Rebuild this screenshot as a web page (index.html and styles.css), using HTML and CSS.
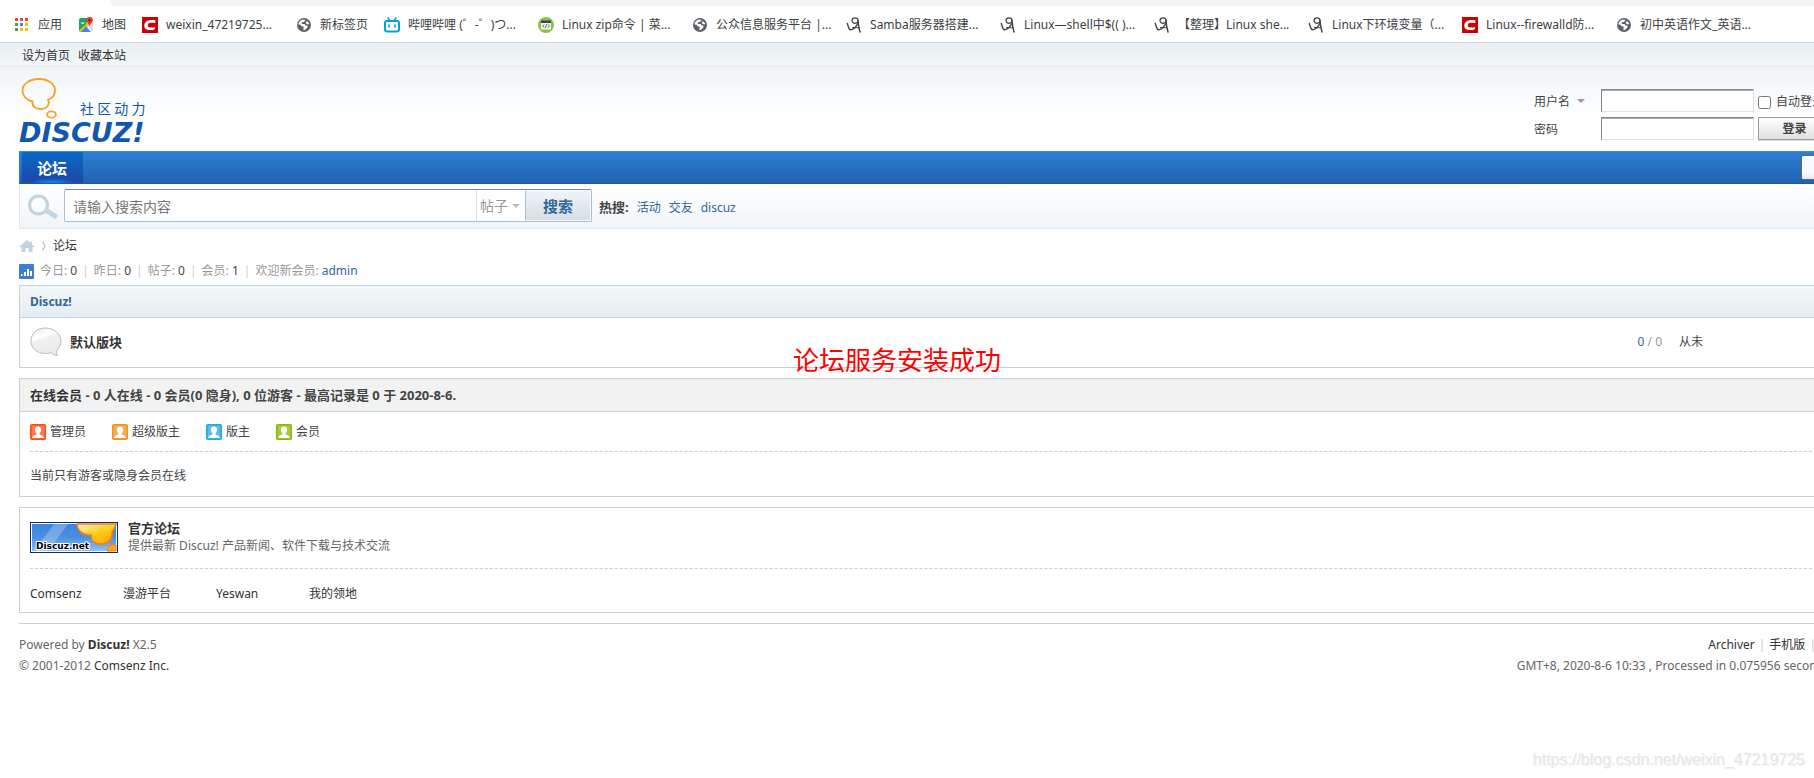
FILE: index.html
```
<!DOCTYPE html>
<html lang="zh-CN">
<head>
<meta charset="utf-8">
<title>论坛 - Powered by Discuz!</title>
<link rel="stylesheet" href="styles.css">
</head>
<body>
<svg class="defs" width="0" height="0" aria-hidden="true">
  <defs>
    <symbol id="globe" viewBox="0 0 16 16">
      <circle cx="8" cy="8" r="7" fill="#5f6368"/>
      <path d="M2.400 7.500C2.700 4.800 4.600 2.800 7.500 2.500L9.500 3 8.200 4.800 6 5.200 5.600 7H8.800L9.400 8.400H11.200L11.600 10 10 12 7.600 13.600 7.400 11.200 8 9.800 5.600 9.200 4.600 7.800z" fill="#fff"/>
      <path d="M11 4 13.300 6.600 12.400 7.600 10.400 6.800 9.800 5.600z" fill="#fff"/>
    </symbol>
    <symbol id="csdn" viewBox="0 0 16 16">
      <path d="M0 0h16v16H0z" fill="#c00"/>
      <path d="M13.600 3.400C11.500 2.900 9.200 2.900 7 3.300 4 3.900 2.400 6 2.300 8.600 2.200 11.600 4.400 13 7.300 13.100c1.900 0 3.800-.1 5.300-.6l.4-2.600c-1.600.5-3.200.6-4.600.5C6.500 10.300 5.600 9.600 5.700 8.200 5.900 6.600 7 5.800 8.600 5.700c1.600-.1 3.100 0 4.600.4z" fill="#fff"/>
    </symbol>
    <symbol id="nine" viewBox="0 0 16 16">
      <g fill="none" stroke="#444" stroke-linecap="round">
        <ellipse cx="9" cy="3.600" rx="3" ry="2.700" stroke-width="1.200"/>
        <path d="M12 3.500C12.200 7 12.800 11 14 15" stroke-width="1.500"/>
        <path d="M11.800 6.500C10 10 8 12 5.500 12.600 3.800 13 3 12 2.600 10.500L1.300 6.500" stroke-width="1.400"/>
        <path d="M6.500 10.500 12.800 10.800" stroke-width="1"/>
      </g>
    </symbol>
    <symbol id="member" viewBox="0 0 16 16">
      <rect x=".5" y=".5" width="15" height="15" rx="1" fill="currentColor" stroke="currentColor"/>
      <rect x="1.500" y="1.500" width="13" height="13" fill="#fff" opacity=".25"/>
      <path d="M8 2.500C5.800 2.500 4.800 4 4.900 6c.1 1.400.7 2.500 1.500 3.200v1.200C4.200 11 2.500 11.800 2 14h12c-.5-2.200-2.200-3-4.400-3.600V9.200C10.400 8.500 11 7.400 11.100 6 11.200 4 10.200 2.500 8 2.500z" fill="#fff"/>
    </symbol>
  </defs>
</svg>

<header class="browser">
  <div class="omnibox"></div>
  <nav class="bookmarks">
    <a class="bm" href="#"><svg viewBox="0 0 16 16"><g><path fill="#ea4335" d="M1 1h3v3H1zM6 1h3v3H6zM11 1h3v3h-3z"/><path fill="#34a853" d="M1 6h3v3H1z"/><path fill="#4285f4" d="M6 6h3v3H6z"/><path fill="#fbbc04" d="M11 6h3v3h-3z"/><path fill="#34a853" d="M1 11h3v3H1z"/><path fill="#fbbc04" d="M6 11h3v3H6zM11 11h3v3h-3z"/></g></svg>应用</a>
    <a class="bm" href="#"><svg viewBox="0 0 16 16"><path fill="#1ea362" d="M1 3q0-2 2-2h7L8 8 1 14z"/><path fill="#dadce0" d="M10 6h5v7q0 2-1 1L8 8z"/><path fill="#fbbc04" d="M1 14 9 6l2 2-7 7H2z"/><path fill="#4285f4" d="M3 15l5-6 5 6z"/><path fill="#fff" d="M3 5.500h3.400C6.200 8 3 7.500 3 5z"/><path fill="#ea4335" d="M11.500 0A3.300 3.300 0 0 0 8.300 3.400C8.300 5.600 11 6.500 11.500 9.500 12 6.500 14.900 5.600 14.900 3.400A3.300 3.300 0 0 0 11.500 0z"/><circle cx="11.600" cy="3.300" r="1.200" fill="#811411"/></svg>地图</a>
    <a class="bm bm-long" href="#"><svg><use href="#csdn"/></svg>weixin_47219725...</a>
    <a class="bm" href="#"><svg><use href="#globe"/></svg>新标签页</a>
    <a class="bm bm-long" href="#"><svg viewBox="0 0 16 16"><rect x="1" y="4" width="14" height="10.500" rx="2" fill="none" stroke="#00a1d6" stroke-width="2"/><path d="M4 1l2 2.500M12 1l-2 2.500M5 8v2M11 8v2" stroke="#00a1d6" stroke-width="1.600" stroke-linecap="round"/></svg>哔哩哔哩 (゜-゜)つ...</a>
    <a class="bm bm-long" href="#"><svg viewBox="0 0 16 16"><circle cx="8" cy="8" r="8" fill="#8bc34a"/><rect x="3" y="4" width="10" height="8.500" fill="#eef3ee"/><path fill="#37474f" d="M3 3.500h10v2.500H3z"/><path d="M6 7.500 4.600 9 6 10.500M10 7.500 11.400 9 10 10.500M8.600 7.200 7.400 10.800" fill="none" stroke="#37474f" stroke-width=".8"/></svg>Linux zip命令 | 菜...</a>
    <a class="bm bm-long" href="#"><svg><use href="#globe"/></svg>公众信息服务平台 |...</a>
    <a class="bm bm-long" href="#"><svg><use href="#nine"/></svg>Samba服务器搭建...</a>
    <a class="bm bm-long" href="#"><svg><use href="#nine"/></svg>Linux—shell中$(( )...</a>
    <a class="bm bm-long" href="#"><svg><use href="#nine"/></svg>【整理】Linux she...</a>
    <a class="bm bm-long" href="#"><svg><use href="#nine"/></svg>Linux下环境变量（...</a>
    <a class="bm bm-long" href="#"><svg><use href="#csdn"/></svg>Linux--firewalld防...</a>
    <a class="bm bm-long" href="#"><svg><use href="#globe"/></svg>初中英语作文_英语...</a>
  </nav>
</header>

<div class="page">
  <div class="topbar"><a href="#">设为首页</a><a href="#">收藏本站</a></div>

  <div class="masthead">
    <div class="wrap masthead-row">
      <a class="logo" href="#" aria-label="Discuz! 社区动力">
        <svg width="140" height="66" viewBox="0 0 140 66">
          <g fill="none" stroke="#f6a02d" stroke-width="1.800">
            <path d="M13.500 24.500C7 23 3.500 18.500 3.500 13.500 3.500 6.500 11 2 20 2s16 5 16 11.500c0 4-2.500 7.500-7 9.500 2.500 4-1 9-7.500 9C16.500 32 13 29.500 13.500 24.500z"/>
            <ellipse cx="32.500" cy="37.500" rx="4.300" ry="3.200"/>
          </g>
          <text class="logo-cn" x="61" y="37">社 区 动 力</text>
          <text class="logo-en" x="0" y="65">DISCUZ!</text>
        </svg>
      </a>
      <form class="login">
        <label class="who" for="user">用户名 <span class="caret"></span></label>
        <input class="field" id="user" type="text">
        <label class="auto"><input type="checkbox">自动登录</label>
        <label class="who" for="pass">密码</label>
        <input class="field" id="pass" type="password">
        <button class="login-btn" type="button">登录</button>
      </form>
    </div>
  </div>

  <div class="wrap">
    <nav class="mainnav">
      <a class="tab" href="#">论坛</a>
      <button class="quick" type="button" aria-label="快捷导航"></button>
    </nav>

    <form class="search">
      <svg class="lens" width="30" height="26" viewBox="0 0 30 26"><path d="M19 17 27 22" stroke="#c2d3e1" stroke-width="5" stroke-linecap="round"/><circle cx="10.500" cy="11" r="9" fill="#fafcfd" stroke="#c2d3e1" stroke-width="3.200"/></svg>
      <div class="searchbox">
        <input class="query" type="text" placeholder="请输入搜索内容" aria-label="搜索内容">
        <button class="scope" type="button">帖子<span class="caret light"></span></button>
        <button class="go" type="button">搜索</button>
      </div>
      <div class="hot"><strong>热搜:</strong><a href="#">活动</a><a href="#">交友</a><a href="#">discuz</a></div>
    </form>

    <nav class="crumbs">
      <a href="#" aria-label="首页"><svg width="16" height="14" viewBox="0 0 16 14"><path fill="#c2d3e1" d="M8 1 0 8h2.500v5h4V9h3v4h4V8H16l-3-2.600V2.500h-1.500V4z"/></svg></a>
      <svg width="6" height="12" viewBox="0 0 6 12"><path d="M1.500 1.500 4 6 1.500 10.500" fill="none" stroke="#aaa"/></svg>
      <a href="#">论坛</a>
    </nav>

    <div class="stats">
      <svg width="15" height="15" viewBox="0 0 15 15"><rect width="15" height="15" rx="1" fill="#3b80cf"/><path fill="#fff" d="M2 10h1.500v2H2zM5 8h2v4H5zM8 5h2v7H8zM11 7h2v5h-2z"/></svg>
      <p>今日: <em>0</em><i>|</i>昨日: <em>0</em><i>|</i>帖子: <em>0</em><i>|</i>会员: <em>1</em><i>|</i>欢迎新会员: <a href="#">admin</a></p>
    </div>

    <section class="box">
      <h2 class="box-head blue"><a href="#">Discuz!</a></h2>
      <div class="forum">
        <svg width="32" height="30" viewBox="0 0 32 30"><defs><linearGradient id="bubble" x2=".4" y2="1"><stop offset="0" stop-color="#ececec"/><stop offset=".4" stop-color="#fff"/><stop offset=".5" stop-color="#f0f0f0"/><stop offset="1" stop-color="#ebebeb"/></linearGradient></defs><path d="M15.500 1C7 1 1 6.500 1 14c0 7.500 6 12.500 14.500 12.500 2 0 4-.3 5.500-.8 1.500 1.500 4 2.800 6.500 2.800-1-1.300-1-3.500-.3-5.500C29.500 20.500 31 17.500 31 14 31 6.500 24 1 15.500 1z" fill="url(#bubble)" stroke="#bbb"/></svg>
        <a class="forum-name" href="#">默认版块</a>
        <span class="count"><b>0</b> / 0</span>
        <span class="last">从未</span>
      </div>
    </section>

    <section class="box">
      <h2 class="box-head gray"><a href="#">在线会员</a> - 0 人在线 - 0 会员(0 隐身), 0 位游客 - 最高记录是 0 于 2020-8-6.</h2>
      <div class="box-body">
        <ul class="roles">
          <li><svg class="r-admin"><use href="#member"/></svg>管理员</li>
          <li><svg class="r-super"><use href="#member"/></svg>超级版主</li>
          <li><svg class="r-mod"><use href="#member"/></svg>版主</li>
          <li><svg class="r-user"><use href="#member"/></svg>会员</li>
        </ul>
        <p class="online">当前只有游客或隐身会员在线</p>
      </div>
    </section>

    <section class="box">
      <div class="box-body">
        <div class="official">
          <svg width="88" height="31" viewBox="0 0 88 31">
            <defs>
              <linearGradient id="sky" x2="0" y2="1"><stop offset="0" stop-color="#3b84dc"/><stop offset=".5" stop-color="#4a90e2"/><stop offset="1" stop-color="#8fc0f5"/></linearGradient>
              <linearGradient id="sun" x2=".7" y2="1"><stop offset="0" stop-color="#fff3d0"/><stop offset=".6" stop-color="#ffc80c"/><stop offset="1" stop-color="#ffa51a"/></linearGradient>
            </defs>
            <rect x=".5" y=".5" width="87" height="30" fill="#fff" stroke="#0b2f66"/>
            <path fill="url(#sky)" d="M2 2h84v27H2z"/>
            <path d="M24 2h14L18 29H4z" fill="#fff" opacity=".25"/>
            <path d="M47 2c0 7 7 12 14 11 0 6 4 9 10 9 8 0 12-5 11-12 2-2 3-5 4-8z" fill="url(#sun)" stroke="#ef7d22" stroke-width="1.600"/>
            <path d="M77 29c0-5 4-7 9-6v6z" fill="#ffa51a" stroke="#ef7d22"/>
            <text class="badge-text" x="6" y="27">Discuz.net</text>
          </svg>
          <div><a class="official-title" href="#">官方论坛</a><p>提供最新 Discuz! 产品新闻、软件下载与技术交流</p></div>
        </div>
        <ul class="links">
          <li><a href="#">Comsenz</a></li><li><a href="#">漫游平台</a></li><li><a href="#">Yeswan</a></li><li><a href="#">我的领地</a></li>
        </ul>
      </div>
    </section>

    <footer class="footer">
      <div><p>Powered by <strong>Discuz!</strong> X2.5</p><p>© 2001-2012 <a href="#">Comsenz Inc.</a></p></div>
      <div class="foot-right"><p class="foot-links"><a href="#">Archiver</a><i>|</i><a href="#">手机版</a><i>|</i></p><p>GMT+8, 2020-8-6 10:33 , Processed in 0.075956 second(s)</p></div>
    </footer>
  </div>
</div>
<p class="note">论坛服务安装成功</p>
<p class="watermark">https://blog.csdn.net/weixin_47219725</p>
</body>
</html>
```

FILE: styles.css
```
* { box-sizing: border-box; }
body {
  margin: 0;
  min-height: 100vh;
  position: relative;
  overflow: hidden;
  background: #fff;
  color: #444;
  font: 12px/18px "Noto Sans", "Noto Sans CJK SC", sans-serif;
}
p, h2, ul { margin: 0; padding: 0; }
ul { list-style: none; }
a { color: #333; text-decoration: none; }
i { font-style: normal; }
svg { display: block; flex: none; }
button, input { font: inherit; margin: 0; }
.defs { position: absolute; }

/* Browser chrome */
.browser { border-bottom: 1px solid #d5d7da; overflow: hidden; }
.omnibox { height: 6px; margin-left: 110px; background: #f1f3f4; border-bottom-left-radius: 8px; }
.bookmarks { display: flex; gap: 16px; padding: 10px 14px 8px; }
.bm { display: flex; align-items: center; gap: 8px; white-space: nowrap; line-height: 18px; color: #3c4043; }
.bm-long { width: 138px; flex: none; }
.bm svg { width: 16px; height: 16px; }

/* Page frame */
.page { overflow: hidden; }
.wrap { margin: 0 -19px 0 19px; }
.topbar {
  display: flex; gap: 8px; padding: 4px 22px 1px;
  background: linear-gradient(#e9eff3, #f2f6f9);
  border-bottom: 1px solid #e3e9ee;
}
.masthead { background: linear-gradient(#f0f4f8, #fff 52px); }
.masthead-row { display: flex; justify-content: space-between; padding: 10px 0 8px; }
.logo svg { overflow: visible; }
.logo-cn { font: 14px "Noto Sans CJK SC", sans-serif; fill: #1058ad; }
.logo-en { font: italic bold 27px "DejaVu Sans", sans-serif; fill: #1058ad; }

.login {
  display: grid;
  grid-template-columns: 63px 153px 75px;
  grid-auto-rows: 24px;
  gap: 4px;
  align-items: center;
  align-self: flex-start;
  padding-top: 12px;
}
.who { padding-top: 2px; white-space: nowrap; }
.caret {
  display: inline-block; margin-left: 4px; vertical-align: 3px;
  border: 4px solid transparent; border-top-color: #999; border-bottom: 0;
}
.caret.light { border-top-color: #bbb; }
.field { width: 153px; height: 23px; align-self: start; border: 1px solid; border-color: #848484 #e0e0e0 #e0e0e0 #848484; background: #fff; box-shadow: inset 0 1px 0 #aaa; }
.auto { display: flex; align-items: center; gap: 5px; padding-top: 2px; white-space: nowrap; }
.auto input { width: 13px; height: 13px; }
.login-btn { height: 23px; align-self: start; padding: 0 2px 0 0; border: 1px solid #999; background: linear-gradient(#fff, #e0e0e0); font-weight: bold; font-size: 12px; line-height: 20px; color: #444; box-shadow: 0 1px 0 #ddd; }

.mainnav {
  display: flex; justify-content: space-between; align-items: center;
  height: 33px; padding-left: 2px;
  border: 1px solid #1d58a0; border-top-color: #3a8bdc; border-left-color: #2b7acd;
  background: linear-gradient(#2d80d4, #2161b0);
}
.tab {
  padding: 1px 16px 0 15px; color: #fff; font-size: 15px; font-weight: bold; line-height: 30px;
  background: radial-gradient(24px 5px at 50% 100%, #0a8cff, transparent), linear-gradient(#056bc8, #2145a6);
}
.quick { width: 31px; height: 25px; border: 1px solid #666; border-radius: 2px; background: linear-gradient(#f8faff 70%, #dfe8f8); }

.search {
  display: flex; align-items: flex-start; padding: 5px 0 6px 8px;
  border: 1px solid #dfe9f1; border-top: 0;
  background: linear-gradient(#fff, #f1f5f8);
}
.lens { margin-top: 5px; }
.searchbox { display: flex; height: 33px; margin-left: 6px; border: 1px solid #a7bfd3; border-top-color: #78879b; border-radius: 2px; background: #fff; }
.query { width: 411px; border: 0; padding: 2px 8px 0; background: none; font-size: 14px; outline: 0; }
.query::placeholder { color: #777; opacity: 1; }
.scope { width: 49px; padding: 0 2px 0 0; border: 0; border-left: 1px solid #ddd; background: none; color: #999; font-size: 14px; white-space: nowrap; }
.go { width: 66px; padding: 0; border: 1px solid #f5f8fa; border-left: 1px solid #a7bfd3; background: linear-gradient(#eff4f7, #d6dee5); color: #369; font-size: 15px; font-weight: bold; }
.hot { display: flex; align-items: baseline; gap: 8px; padding: 9px 7px 0; }
.hot strong { font-size: 13px; }
.hot a { color: #369; }

.crumbs { display: flex; align-items: center; gap: 6px; padding-top: 8px; }
.stats { display: flex; align-items: center; gap: 6px; padding: 7px 0 5px; color: #999; }
.stats em { font-style: normal; color: #444; }
.stats a { color: #369; }
.stats i { margin: 0 5px; color: #ccc; }

/* Panels */
.box { margin-bottom: 10px; border: 1px solid #cdcdcd; }
.box-head { padding: 7px 10px; font-size: 12px; line-height: 18px; }
.blue { margin-top: -1px; padding-bottom: 6px; border: 1px solid #c2d5e3; border-width: 1px 0; background: linear-gradient(#f3f7f9, #e5edf2); }
.blue a { color: #369; }
.gray { border-bottom: 1px solid #c2d5e3; background: #f2f2f2; font-size: 13px; }
.forum { display: flex; align-items: center; padding: 9px 0 10px 10px; }
.forum-name { flex: 1; margin-left: 8px; font-size: 13px; font-weight: bold; }
.count { margin-right: 17px; color: #999; }
.count b { font-weight: normal; color: #369; }
.last { width: 153px; }

.box-body { padding: 0 10px; }
.roles { display: flex; gap: 26px; padding: 11px 0 10px; border-bottom: 1px dashed #ccc; }
.roles li { display: flex; align-items: center; gap: 4px; }
.roles svg { width: 16px; height: 16px; }
.r-admin { color: #ff4a10; }
.r-super { color: #ec9520; }
.r-mod { color: #20a8dc; }
.r-user { color: #8ab800; }
.online { padding: 15px 0 11px; }

.official { display: flex; gap: 10px; padding: 12px 0 14px; border-bottom: 1px dashed #ccc; color: #666; }
.official svg { margin-top: 2px; }
.official-title { display: block; font-size: 13px; font-weight: bold; }
.official div { line-height: 17px; }
.badge-text { font: bold 9px "DejaVu Sans", sans-serif; fill: #000; stroke: #fff; stroke-width: 2px; paint-order: stroke; }
.links { display: flex; padding: 16px 0 9px; }
.links li { width: 93px; }

.footer { display: flex; justify-content: space-between; padding-top: 10px; border-top: 1px solid #cdcdcd; color: #666; line-height: 21px; }
.footer strong { color: #333; }
.foot-right { margin-right: -4px; text-align: right; white-space: nowrap; }
.foot-links { padding-right: 17px; }
.foot-links i { margin: 0 4px; color: #ccc; }

/* Annotations over the page */
.note { position: absolute; left: 793px; top: 342px; color: #f00; font-size: 26px; line-height: 36px; white-space: nowrap; }
.watermark { position: absolute; right: 9px; bottom: 8px; color: #e6e6e6; font: 16px/20px "Liberation Sans", sans-serif; text-shadow: 1px 1px 0 #f4f4f4; }
```
